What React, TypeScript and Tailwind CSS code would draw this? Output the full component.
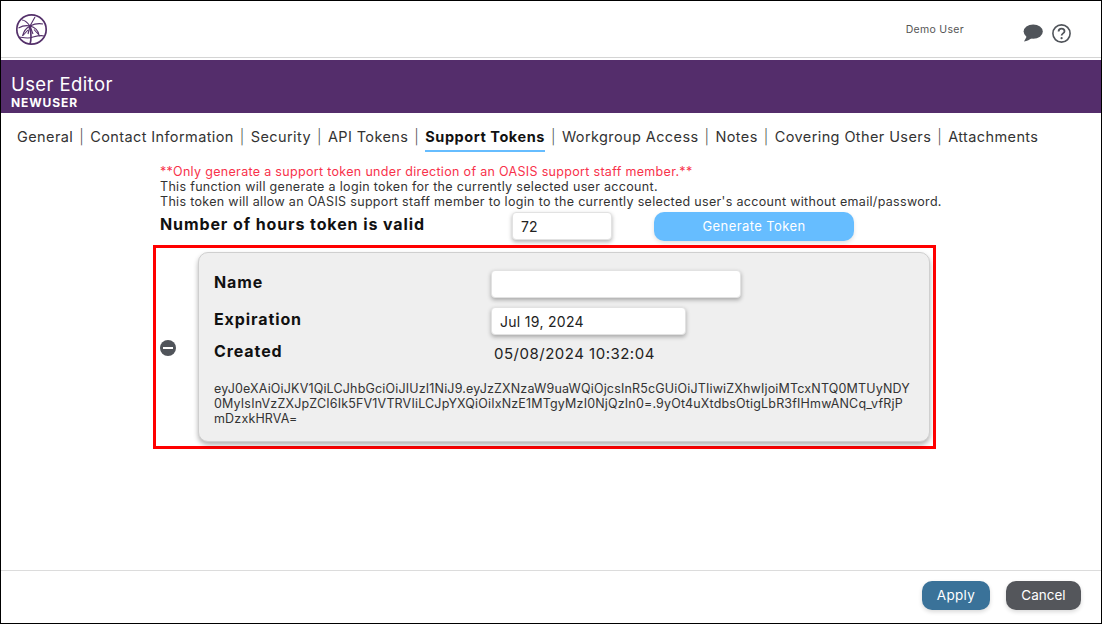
const tabs = [
  "General",
  "Contact Information",
  "Security",
  "API Tokens",
  "Support Tokens",
  "Workgroup Access",
  "Notes",
  "Covering Other Users",
  "Attachments",
];

const tokenLines = [
  "eyJ0eXAiOiJKV1QiLCJhbGciOiJIUzI1NiJ9.eyJzZXNzaW9uaWQiOjcsInR5cGUiOiJTIiwiZXhwIjoiMTcxNTQ0MTUyNDY",
  "0MyIsInVzZXJpZCI6Ik5FV1VTRVIiLCJpYXQiOiIxNzE1MTgyMzI0NjQzIn0=.9yOt4uXtdbsOtigLbR3fIHmwANCq_vfRjP",
  "mDzxkHRVA=",
];

function Logo() {
  return (
    <svg width="33" height="33" viewBox="0 0 33 33" fill="none" stroke="#54306a" strokeWidth="1.1">
      <circle cx="16.5" cy="16.5" r="14.7" strokeWidth="1.7" />
      <path d="M15 13 C12 9 10 7 7 7 M15 13 L20 4 M15 13 C19 11 23 10 28 11 M15 13 C11 12 7 13 3.5 15" />
      <path d="M15 13 C11 15 8.5 19 7.5 23 L13 17 M15 13 C19 14 23 17 24 22 L19 16.5 M15 13 L13 21 M15 13 L18 21" />
      <path d="M15 13 C16 19 17 25 15 31" strokeWidth="1.7" />
      <path d="M4 24 C10 25 14 26 18 24 C22 23 26 22 29 23" />
    </svg>
  );
}

export default function App() {
  return (
    <div className="w-[1102px] h-[624px] border border-black bg-white flex flex-col overflow-hidden text-[#222] font-['Inter','Liberation_Sans',sans-serif]">
      {/* top bar */}
      <div className="h-[57px] flex items-center border-b border-[#d4d4d4] pl-[14px] pr-[30px] shrink-0">
        <Logo />
        <span className="ml-auto mt-[1px] text-[10.5px] tracking-[0.3px] text-[#555]">Demo User</span>
        <svg className="ml-[59px] mt-[7px]" width="20" height="18" viewBox="0 0 20 18" fill="#50545a">
          <ellipse cx="10.2" cy="7.6" rx="9.6" ry="7.2" />
          <path d="M4 12 L1 17.5 C4 17 7 15.5 9 14 Z" />
        </svg>
        <svg className="ml-[9px] mt-[8px]" width="19" height="19" viewBox="0 0 19 19" fill="none" stroke="#50545a">
          <circle cx="9.5" cy="9.5" r="8.6" strokeWidth="1.6" />
          <path d="M6.6 7.4 C6.6 5.6 8 4.6 9.6 4.6 C11.3 4.6 12.5 5.8 12.5 7.2 C12.5 9.4 9.6 9.4 9.6 11.6" strokeWidth="1.8" />
          <circle cx="9.6" cy="14.2" r="1.1" fill="#50545a" stroke="none" />
        </svg>
      </div>

      {/* title */}
      <div className="mt-[2px] h-[53px] bg-[#542d6b] text-white pl-[10px] pt-[14px] shrink-0">
        <div className="text-[18.5px] tracking-[0.4px] leading-[21px]">User Editor</div>
        <div className="text-[12px] tracking-[0.9px] leading-[16px] font-bold">NEWUSER</div>
      </div>

      {/* tabs */}
      <div className="flex h-[38px] pl-[16px] items-start pt-[14px] text-[14.5px] tracking-[0.4px] leading-[20px] text-[#333] shrink-0">
        {tabs.map((t, i) => (
          <div key={t} className="flex">
            {i > 0 && <span className="mx-[6px] font-light text-[#555]">|</span>}
            {t === "Support Tokens" ? (
              <span className="font-bold tracking-[0.55px] text-[#111] h-[25px] border-b-2 border-[#66bdff]">{t}</span>
            ) : (
              <span>{t}</span>
            )}
          </div>
        ))}
      </div>

      {/* body */}
      <div className="flex-1 pl-[159px] pt-[13px]">
        <div className="text-[12.5px] tracking-[0.32px] leading-[15px] text-[#333]">
          <div className="text-[#f8324b]">**Only generate a support token under direction of an OASIS support staff member.**</div>
          <div>This function will generate a login token for the currently selected user account.</div>
          <div>This token will allow an OASIS support staff member to login to the currently selected user's account without email/password.</div>
        </div>

        <div className="flex items-start mt-[2px] h-[34px]">
          <div className="w-[352px] pt-[2px] text-[16px] tracking-[0.9px] leading-[22px] font-bold text-[#111]">Number of hours token is valid</div>
          <input
            readOnly
            value="72"
            className="w-[100px] h-[28px] pl-[8px] mt-[1px] bg-white rounded-[4px] border border-[#e2e2e2] shadow-[0_2px_4px_rgba(0,0,0,0.3)] text-[14px] text-[#222] outline-none"
          />
          <button className="ml-[42px] mt-[1px] w-[200px] h-[29px] rounded-[10px] bg-[#66bdff] text-white text-[13px] tracking-[0.4px] shadow-[0_2px_4px_rgba(0,0,0,0.12)]">
            Generate Token
          </button>
        </div>

        {/* highlighted token */}
        <div className="-ml-[7px] w-[783px] h-[204px] border-[3px] border-[#ff0000] flex items-center pl-[4px] pr-[3px]">
          <div className="w-[16px] h-[16px] rounded-full bg-[#50545a] flex items-center justify-center shrink-0 mt-[1px]">
            <div className="w-[10px] h-[2px] bg-white" />
          </div>
          <div className="ml-[22px] w-[732px] h-[190px] rounded-[10px] bg-[#efefef] border border-[#cfcfcf] shadow-[0_3px_5px_rgba(0,0,0,0.3)] pl-[15px] pr-[12px] pt-[18px]">
            <div className="flex h-[37px]">
              <div className="w-[277px] text-[16px] tracking-[0.9px] leading-[23px] font-bold text-[#111]">Name</div>
              <input readOnly className="-mt-[1px] w-[250px] h-[28px] bg-white rounded-[4px] border border-[#e2e2e2] shadow-[0_2px_4px_rgba(0,0,0,0.3)] outline-none" />
            </div>
            <div className="flex h-[32px]">
              <div className="w-[277px] text-[16px] tracking-[0.9px] leading-[23px] font-bold text-[#111]">Expiration</div>
              <input
                readOnly
                value="Jul 19, 2024"
                className="-mt-[1px] w-[195px] h-[28px] pl-[8px] bg-white rounded-[4px] border border-[#e2e2e2] shadow-[0_2px_4px_rgba(0,0,0,0.3)] text-[14px] tracking-[0.3px] text-[#222] outline-none"
              />
            </div>
            <div className="flex h-[41px]">
              <div className="w-[280px] text-[16px] tracking-[0.9px] leading-[23px] font-bold text-[#111]">Created</div>
              <div className="pt-[2px] text-[15px] tracking-[0.5px] leading-[23px] text-[#222]">05/08/2024 10:32:04</div>
            </div>
            <div className="text-[12.5px] tracking-[0.17px] leading-[15px] text-[#333] whitespace-nowrap">
              {tokenLines.map((line) => (
                <div key={line}>{line}</div>
              ))}
            </div>
          </div>
        </div>
      </div>

      {/* footer */}
      <div className="h-[53px] border-t border-[#dcdcdc] flex justify-end items-start pt-[10px] pr-[20px] gap-[16px] shrink-0">
        <button className="w-[68px] h-[29px] rounded-[10px] bg-[#3a7299] text-white text-[13.5px] tracking-[0.3px] shadow-[0_2px_4px_rgba(0,0,0,0.15)]">Apply</button>
        <button className="w-[75px] h-[29px] rounded-[10px] bg-[#54565b] text-white text-[13.5px] shadow-[0_2px_4px_rgba(0,0,0,0.15)]">Cancel</button>
      </div>
    </div>
  );
}
